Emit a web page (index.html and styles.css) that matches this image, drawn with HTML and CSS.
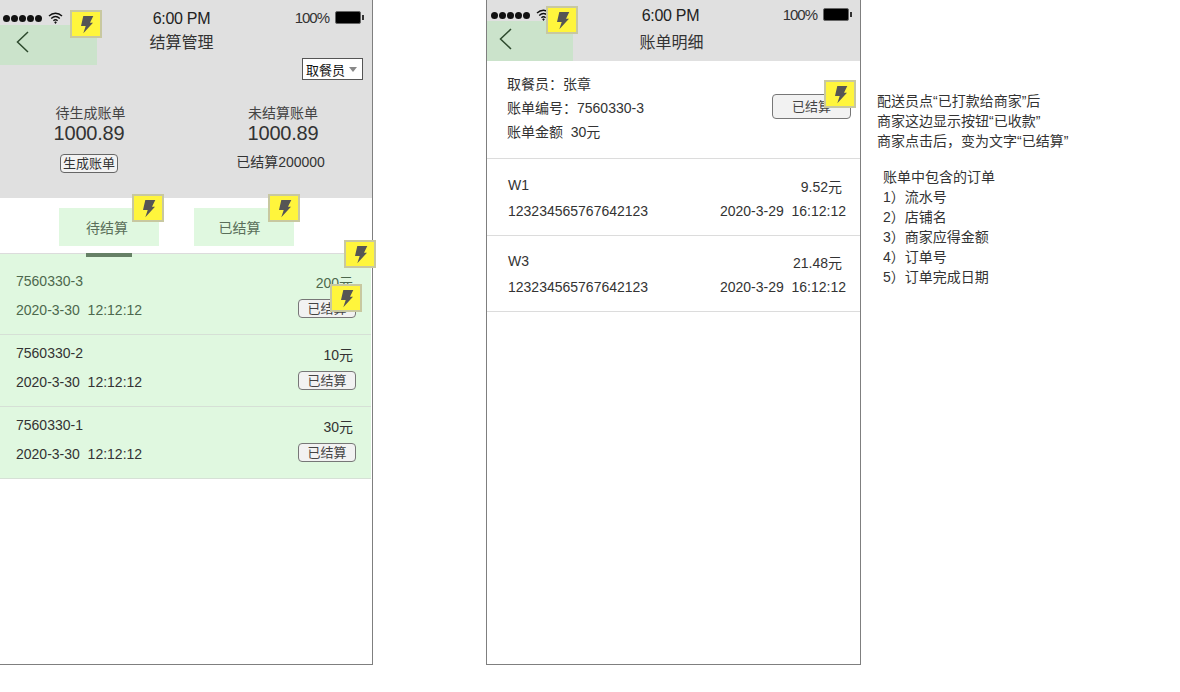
FILE: index.html
```html
<!DOCTYPE html>
<html lang="zh-CN">
  <head>
    <meta charset="UTF-8" />
    <title>结算管理</title>
    <link rel="stylesheet" href="styles.css">
  </head>
  <body>
    <svg class="defs" width="0" height="0">
      <symbol id="bolt" viewBox="2 2 28 24">
        <path d="M13.3 6H23.3L20 12.7H23L13.3 23.3L15.7 16H11Z" fill="#555" />
      </symbol>
      <symbol id="wifi" viewBox="0 0 15 14">
        <path d="M1 5C4.8 1.4 10.2 1.4 14 5M3.2 7.4C5.8 5 9.2 5 11.8 7.4M5.4 9.7C6.7 8.6 8.3 8.6 9.6 9.7" fill="none" stroke="#111" stroke-width="1.4" />
        <path d="M6.2 11.2L7.5 10.2L8.8 11.2L7.5 13Z" fill="#111" />
      </symbol>
      <symbol id="back" viewBox="0 0 13 22">
        <path d="M12 1L1.5 11L12 21" fill="none" stroke="#2e4a2e" stroke-width="1.5" />
      </symbol>
    </svg>

    <!-- 结算管理 -->
    <div class="phone phone-list">
      <div class="top-gray">
        <div class="status status-list">
          <div class="signal"><i></i><i></i><i></i><i></i><i></i><svg class="wifi"><use href="#wifi" /></svg></div>
          <div class="time">6:00 PM</div>
          <div class="power">100%<span class="battery"></span></div>
        </div>
        <div class="nav nav-list">
          <div class="back"><svg class="chevron"><use href="#back" /></svg></div>
          <div class="nav-title">结算管理</div>
        </div>
        <div class="picker-row">
          <div class="picker">取餐员<span class="caret"></span></div>
        </div>
        <div class="stats">
          <div class="stat stat-left">
            <div class="stat-label">待生成账单</div>
            <div class="stat-num">1000.89</div>
            <button class="small-btn">生成账单</button>
          </div>
          <div class="stat stat-right">
            <div class="stat-label">未结算账单</div>
            <div class="stat-num">1000.89</div>
            <div class="stat-done">已结算200000</div>
          </div>
        </div>
      </div>

      <div class="tabs">
        <div class="tab tab-first">待结算</div>
        <div class="tab tab-second">已结算</div>
      </div>
      <div class="tab-line"><div class="tab-mark"></div></div>

      <div class="bills">
        <div class="bill bill-active">
          <div class="bill-top"><span>7560330-3</span><span class="bill-money">200元</span></div>
          <div class="bill-bottom"><span>2020-3-30&nbsp; 12:12:12</span><button class="done-btn">已结算</button></div>
        </div>
        <div class="bill">
          <div class="bill-top"><span>7560330-2</span><span class="bill-money">10元</span></div>
          <div class="bill-bottom"><span>2020-3-30&nbsp; 12:12:12</span><button class="done-btn">已结算</button></div>
        </div>
        <div class="bill">
          <div class="bill-top"><span>7560330-1</span><span class="bill-money">30元</span></div>
          <div class="bill-bottom"><span>2020-3-30&nbsp; 12:12:12</span><button class="done-btn">已结算</button></div>
        </div>
      </div>

      <svg class="badge badge-back"><use href="#bolt" /></svg>
      <svg class="badge badge-tab1"><use href="#bolt" /></svg>
      <svg class="badge badge-tab2"><use href="#bolt" /></svg>
      <svg class="badge badge-list"><use href="#bolt" /></svg>
      <svg class="badge badge-row"><use href="#bolt" /></svg>
    </div>

    <!-- 账单明细 -->
    <div class="phone phone-detail">
      <div class="top-gray">
        <div class="status status-detail">
          <div class="signal"><i></i><i></i><i></i><i></i><i></i><svg class="wifi"><use href="#wifi" /></svg></div>
          <div class="time">6:00 PM</div>
          <div class="power">100%<span class="battery"></span></div>
        </div>
        <div class="nav nav-detail">
          <div class="back"><svg class="chevron"><use href="#back" /></svg></div>
          <div class="nav-title">账单明细</div>
        </div>
      </div>

      <div class="summary">
        <div class="summary-lines">
          <div>取餐员：张章</div>
          <div>账单编号：7560330-3</div>
          <div>账单金额&nbsp; 30元</div>
        </div>
        <button class="done-btn done-btn-big">已结算</button>
      </div>

      <div class="order order-first">
        <div class="order-top"><span>W1</span><span class="order-money">9.52元</span></div>
        <div class="order-bottom"><span>123234565767642123</span><span>2020-3-29&nbsp; 16:12:12</span></div>
      </div>
      <div class="order">
        <div class="order-top"><span>W3</span><span class="order-money">21.48元</span></div>
        <div class="order-bottom"><span>123234565767642123</span><span>2020-3-29&nbsp; 16:12:12</span></div>
      </div>

      <svg class="badge badge-back2"><use href="#bolt" /></svg>
      <svg class="badge badge-done"><use href="#bolt" /></svg>
    </div>

    <!-- Notes -->
    <div class="notes">
      <div class="note-block">
        <div>配送员点“已打款给商家”后</div>
        <div>商家这边显示按钮“已收款”</div>
        <div>商家点击后，变为文字“已结算”</div>
      </div>
      <div class="note-block note-indent">
        <div>账单中包含的订单</div>
        <div>1）流水号</div>
        <div>2）店铺名</div>
        <div>3）商家应得金额</div>
        <div>4）订单号</div>
        <div>5）订单完成日期</div>
      </div>
    </div>
  </body>
</html>
```

FILE: styles.css
```css
* {
  margin: 0;
  padding: 0;
  box-sizing: border-box;
}

body {
  font-family: "Liberation Sans", "Noto Sans CJK SC", sans-serif;
  font-size: 14px;
  color: #333;
  background: #fff;
  display: flex;
  align-items: flex-start;
  height: 692px;
  overflow: hidden;
}

.defs {
  position: absolute;
}

.phone {
  position: relative;
  height: 665px;
  border-bottom: 1px solid #7f7f7f;
  border-right: 1px solid #7f7f7f;
  flex-shrink: 0;
}

.phone-list {
  width: 373px;
}

.phone-detail {
  width: 375px;
  margin-left: 113px;
  border-left: 1px solid #7f7f7f;
}

.top-gray {
  background: #e0e0e0;
}

/* Status bar */
.status {
  display: flex;
  align-items: center;
  justify-content: space-between;
  position: relative;
}

.status-list {
  height: 25px;
  padding: 13px 11px 2px 3px;
}

.status-detail {
  height: 21px;
  padding: 9px 11px 0 4px;
}

.signal {
  display: flex;
  align-items: center;
  gap: 1px;
}

.signal i {
  width: 7px;
  height: 7px;
  border-radius: 50%;
  background: #111;
}

.wifi {
  width: 15px;
  height: 14px;
  margin-left: 5px;
}

.time {
  position: absolute;
  left: 0;
  right: 0;
  top: 11px;
  text-align: center;
  font-size: 16px;
  line-height: 16px;
  letter-spacing: -0.3px;
  color: #222;
  margin-left: -9px;
}

.status-detail .time {
  top: 8px;
  margin-left: -6px;
}

.power {
  display: flex;
  align-items: center;
  margin-bottom: 2px;
  font-size: 15px;
  letter-spacing: -1px;
  color: #333;
}

.battery {
  position: relative;
  width: 26px;
  height: 13px;
  margin-left: 6px;
  background: #000;
  border: 1px solid #666;
  border-radius: 2px;
}

.battery::after {
  content: "";
  position: absolute;
  right: -4px;
  top: 3px;
  width: 2px;
  height: 5px;
  background: #333;
}

/* Nav */
.nav {
  position: relative;
  height: 40px;
  text-align: center;
}

.back {
  position: absolute;
  left: 0;
  top: 0;
  height: 40px;
  background: #cbe3cb;
}

.nav-list .back {
  width: 97px;
}

.nav-detail .back {
  width: 86px;
}

.chevron {
  display: block;
  width: 13px;
  height: 22px;
  margin-left: 16px;
}

.nav-list .chevron {
  margin-top: 6px;
}

.nav-detail .chevron {
  margin-top: 7px;
  margin-left: 12px;
}

.nav-title {
  position: relative;
  font-size: 16px;
  line-height: 24px;
  color: #333;
}

.nav-list .nav-title {
  padding: 6px 9px 0 0;
}

.nav-detail .nav-title {
  padding: 10px 0 0 0;
  margin-left: -4px;
}

/* Picker + stats */
.picker-row {
  display: flex;
  justify-content: flex-end;
  padding-right: 9px;
  margin-top: -7px;
}

.picker {
  position: relative;
  width: 61px;
  height: 22px;
  background: #fff;
  border: 1px solid #555;
  font-size: 13px;
  line-height: 21px;
  padding: 1px 0 0 3px;
  color: #111;
}

.caret {
  position: absolute;
  right: 5px;
  top: 8px;
  border-left: 4px solid transparent;
  border-right: 4px solid transparent;
  border-top: 5px solid #888;
}

.stats {
  display: flex;
  height: 118px;
  padding-top: 23px;
}

.stat {
  display: flex;
  flex: none;
  flex-direction: column;
  align-items: center;
  width: 200px;
}

.stat-left {
  margin-left: -11px;
}

.stat-right {
  margin-left: -6px;
}

.stat-left .stat-label {
  margin-left: 3px;
}

.stat-label {
  line-height: 20px;
  color: #444;
}

.stat-num {
  font-size: 20px;
  line-height: 20px;
  letter-spacing: -0.2px;
  color: #333;
}

.small-btn {
  width: 58px;
  height: 19px;
  margin-top: 11px;
  font: inherit;
  font-size: 13px;
  line-height: 15px;
  color: #333;
  background: #f2f2f2;
  border: 1px solid #666;
  border-radius: 4px;
}

.stat-done {
  margin: 9px 5px 0 0;
  line-height: 20px;
  color: #333;
}

/* Tabs */
.tabs {
  display: flex;
  gap: 35px;
  height: 55px;
  padding: 10px 0 0 59px;
}

.tab {
  width: 100px;
  height: 38px;
  background: #e0f8e0;
  color: #5a6f5a;
  text-align: center;
  line-height: 40px;
}

.tab-first {
  padding-right: 4px;
}

.tab-second {
  padding-right: 9px;
}

.tab-line {
  position: relative;
  height: 1px;
  background: #dcdcdc;
}

.tab-mark {
  position: absolute;
  left: 86px;
  top: 0;
  width: 46px;
  height: 4px;
  background: #668066;
}

/* Bills */
.bills {
  width: 371px;
}

.bill {
  height: 72px;
  padding: 8px 15px 0 16px;
  background: #e0f8e0;
  border-bottom: 1px solid #d6e0d6;
  color: #333;
}

.bill-active {
  height: 81px;
  padding-top: 17px;
  color: #4d684d;
}

.bill-top,
.bill-bottom,
.order-top,
.order-bottom {
  display: flex;
  justify-content: space-between;
  align-items: flex-start;
  line-height: 20px;
}

.bill-money {
  margin: 2px 3px 0 0;
}

.bill-bottom {
  margin-top: 7px;
}

.done-btn {
  width: 58px;
  height: 19px;
  margin-top: -1px;
  font: inherit;
  font-size: 13px;
  line-height: 15px;
  color: #444;
  background: #f2f2f2;
  border: 1px solid #777;
  border-radius: 4px;
}

.done-btn-big {
  width: 79px;
  height: 25px;
  margin: 22px 0 0 0;
}

/* Detail page */
.summary {
  display: flex;
  justify-content: space-between;
  width: 373px;
  height: 98px;
  padding: 11px 9px 0 20px;
  border-bottom: 1px solid #dcdcdc;
}

.summary-lines {
  line-height: 24px;
}

.order {
  height: 76px;
  padding: 15px 14px 0 21px;
  border-bottom: 1px solid #dcdcdc;
}

.order-first {
  height: 77px;
  padding-top: 16px;
}

.order-money {
  margin: 2px 4px 0 0;
}

.order-bottom {
  margin-top: 4px;
}

/* Yellow hotspot markers */
.badge {
  position: absolute;
  width: 32px;
  height: 28px;
  background: #fff53c;
  border: 2px solid #c8c8a0;
}

.badge-back {
  left: 70px;
  top: 10px;
}

.badge-tab1 {
  left: 132px;
  top: 194px;
}

.badge-tab2 {
  left: 268px;
  top: 194px;
}

.badge-list {
  left: 344px;
  top: 240px;
}

.badge-row {
  left: 330px;
  top: 284px;
}

.badge-back2 {
  left: 59px;
  top: 6px;
}

.badge-done {
  left: 337px;
  top: 80px;
}

/* Notes */
.notes {
  margin-left: 16px;
  padding-top: 91px;
  line-height: 20px;
  color: #333;
}

.note-indent {
  margin: 16px 0 0 6px;
}
```
